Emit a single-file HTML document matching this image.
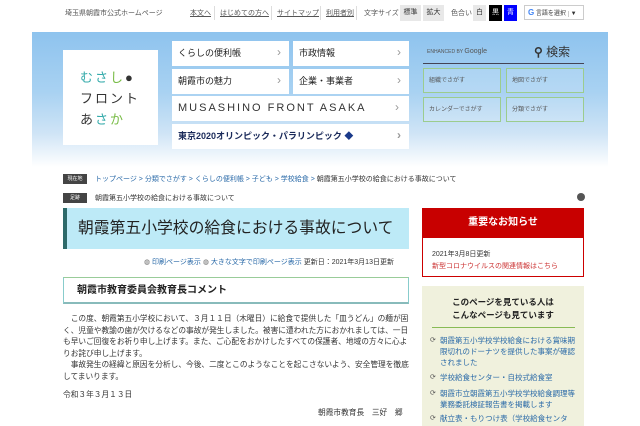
<!DOCTYPE html>
<html><head><meta charset="utf-8"><style>
*{margin:0;padding:0;box-sizing:border-box}
body{width:640px;height:426px;overflow:hidden;background:#fff;font-family:"Liberation Sans","Noto Sans CJK JP",sans-serif;color:#333;position:relative}
.a{position:absolute;white-space:nowrap}
.tb{font-size:7px;color:#555}
.tb u{color:#555}
.btn{position:absolute;font-size:7px;text-align:center;line-height:16px;height:16px}
.hero{position:absolute;left:32px;top:32px;width:576px;height:135px;background:linear-gradient(180deg,#8ec3ee 0%,#a9d2f2 45%,#cfe4f6 75%,#fff 100%)}
.m{position:absolute;background:#fff;font-size:9px;color:#222;padding-left:6px;line-height:25px;height:25px}
.m:after{content:"›";position:absolute;right:8px;top:-1px;color:#999;font-size:12px}
.sb{position:absolute;border:1px solid #9ccc8e;background:rgba(255,255,255,.15);font-size:6px;color:#555;padding-left:5px;line-height:24px;height:25px}
.body{font-size:7.7px;line-height:11.5px;color:#333}
.li{font-size:7.5px;color:#2a6aa8;line-height:10.8px;position:absolute;left:430px;width:150px;padding-left:10px}
.li:before{content:"⟳";position:absolute;left:0;color:#555;font-size:7px}
</style></head><body>
<div class="a tb" style="left:65px;top:8px">埼玉県朝霞市公式ホームページ</div>
<div class="a tb" style="left:190px;top:8px"><u>本文へ</u></div>
<div class="a tb" style="left:220px;top:8px"><u>はじめての方へ</u></div>
<div class="a tb" style="left:277px;top:8px"><u>サイトマップ</u></div>
<div class="a tb" style="left:326px;top:8px"><u>利用者別</u></div>
<div class="a" style="left:214px;top:6px;width:1px;height:14px;background:#ddd"></div>
<div class="a" style="left:271px;top:6px;width:1px;height:14px;background:#ddd"></div>
<div class="a" style="left:320px;top:6px;width:1px;height:14px;background:#ddd"></div>
<div class="a" style="left:356px;top:6px;width:1px;height:14px;background:#ddd"></div>
<div class="a tb" style="left:364px;top:8px">文字サイズ</div>
<div class="btn" style="left:400px;top:5px;width:21px;background:#e8e8e8;color:#333">標準</div>
<div class="btn" style="left:423px;top:5px;width:21px;background:#e8e8e8;color:#333">拡大</div>
<div class="a tb" style="left:451px;top:8px">色合い</div>
<div class="btn" style="left:473px;top:5px;width:13px;background:#e8e8e8;color:#333">白</div>
<div class="btn" style="left:489px;top:5px;width:13px;background:#000;color:#fff">黒</div>
<div class="btn" style="left:504px;top:5px;width:13px;background:#00f;color:#fff">青</div>
<div class="a" style="left:524px;top:5px;width:60px;height:15px;border:1px solid #ccc;font-size:6px;line-height:13px;padding-left:3px;color:#333"><b style="color:#4285f4;font-size:8px">G</b> 言語を選択 <span style="border-left:1px solid #ccc;padding-left:2px">▼</span></div>

<div class="hero"></div>
<div class="a" style="left:63px;top:50px;width:95px;height:95px;background:#fff;font-size:13px;line-height:21px;padding:17px 0 0 17px;letter-spacing:2px;color:#333;white-space:normal">
<span style="color:#3aa">む</span><span style="color:#3aa">さ</span><span style="color:#7b4">し</span>●<br>フロント<br>あ<span style="color:#3aa">さ</span><span style="color:#7b4">か</span></div>
<div class="m" style="left:172px;top:41px;width:117px">くらしの便利帳</div>
<div class="m" style="left:293px;top:41px;width:116px">市政情報</div>
<div class="m" style="left:172px;top:69px;width:117px">朝霞市の魅力</div>
<div class="m" style="left:293px;top:69px;width:116px">企業・事業者</div>
<div class="m" style="left:172px;top:96px;width:237px;font-size:11px;letter-spacing:2px;color:#333">MUSASHINO FRONT ASAKA</div>
<div class="m" style="left:172px;top:124px;width:237px;font-weight:bold;color:#1a2a5a">東京2020オリンピック・パラリンピック <span style="color:#1a3a8a">◆</span></div>
<div class="a" style="left:427px;top:48px;font-size:5px;color:#555">ENHANCED BY <span style="font-size:7px">Google</span></div>
<div class="a" style="left:534px;top:43px;font-size:12px;color:#333"><b>⚲</b> 検索</div>
<div class="a" style="left:423px;top:63px;width:161px;height:1px;background:#445"></div>
<div class="sb" style="left:423px;top:68px;width:78px">組織でさがす</div>
<div class="sb" style="left:506px;top:68px;width:78px">地図でさがす</div>
<div class="sb" style="left:423px;top:97px;width:78px">カレンダーでさがす</div>
<div class="sb" style="left:506px;top:97px;width:78px">分類でさがす</div>

<div class="a" style="left:63px;top:174px;width:24px;height:10px;background:#444;color:#fff;font-size:5px;text-align:center;line-height:10px">現在地</div>
<div class="a" style="left:95px;top:174px;font-size:7px;color:#2a6aa8">トップページ &gt; 分類でさがす &gt; くらしの便利帳 &gt; 子ども &gt; 学校給食 &gt; <span style="color:#333">朝霞第五小学校の給食における事故について</span></div>
<div class="a" style="left:63px;top:193px;width:24px;height:10px;background:#444;color:#fff;font-size:5px;text-align:center;line-height:10px">足跡</div>
<div class="a" style="left:95px;top:193px;font-size:7px;color:#333">朝霞第五小学校の給食における事故について</div>
<div class="a" style="left:577px;top:193px;width:8px;height:8px;border-radius:50%;background:#555"></div>

<div class="a" style="left:63px;top:208px;width:346px;height:41px;background:#bdeaf7;border-left:4px solid #2d6a6a;font-size:15.8px;line-height:41px;padding-left:11px;color:#222">朝霞第五小学校の給食における事故について</div>
<div class="a" style="left:144px;top:257px;font-size:7px;color:#2a6aa8"><span style="color:#666">◍</span> 印刷ページ表示 <span style="color:#666">◍</span> 大きな文字で印刷ページ表示 <span style="color:#333">更新日：2021年3月13日更新</span></div>
<div class="a" style="left:63px;top:277px;width:346px;height:27px;border:1px solid #8cc;border-top-color:#9c9;border-bottom:2px solid #8bb;font-size:10px;font-weight:bold;line-height:25px;padding-left:13px;color:#222">朝霞市教育委員会教育長コメント</div>
<div class="a body" style="left:63px;top:313px;width:346px;white-space:normal">　この度、朝霞第五小学校において、３月１１日（木曜日）に給食で提供した「皿うどん」の麺が固く、児童や教諭の歯が欠けるなどの事故が発生しました。被害に遭われた方におかれましては、一日も早いご回復をお祈り申し上げます。また、ご心配をおかけしたすべての保護者、地域の方々に心よりお詫び申し上げます。<br>　事故発生の経緯と原因を分析し、今後、二度とこのようなことを起こさないよう、安全管理を徹底してまいります。</div>
<div class="a body" style="left:63px;top:389px">令和３年３月１３日</div>
<div class="a body" style="left:318px;top:407px">朝霞市教育長　三好　郷</div>

<div class="a" style="left:422px;top:208px;width:162px;height:69px;border:1px solid #c00"></div>
<div class="a" style="left:422px;top:208px;width:162px;height:30px;background:#c80000;color:#fff;font-weight:bold;font-size:10px;text-align:center;line-height:30px">重要なお知らせ</div>
<div class="a" style="left:432px;top:249px;font-size:7px;color:#333">2021年3月8日更新</div>
<div class="a" style="left:432px;top:261px;font-size:7px;color:#c33">新型コロナウイルスの関連情報はこちら</div>
<div class="a" style="left:422px;top:286px;width:162px;height:140px;background:#f0f1dd"></div>
<div class="a" style="left:422px;top:296px;width:162px;text-align:center;font-size:8.5px;font-weight:bold;line-height:13px;color:#222">このページを見ている人は<br>こんなページも見ています</div>
<div class="a" style="left:432px;top:327px;width:143px;height:1px;background:#8b5"></div>
<div class="li" style="top:336px;white-space:normal">朝霞第五小学校学校給食における賞味期限切れのドーナツを提供した事案が確認されました</div>
<div class="li" style="top:373px">学校給食センター・自校式給食室</div>
<div class="li" style="top:389px;white-space:normal">朝霞市立朝霞第五小学校学校給食調理等業務委託検証報告書を掲載します</div>
<div class="li" style="top:414px;overflow:hidden">献立表・もりつけ表（学校給食センタ</div>
</body></html>
